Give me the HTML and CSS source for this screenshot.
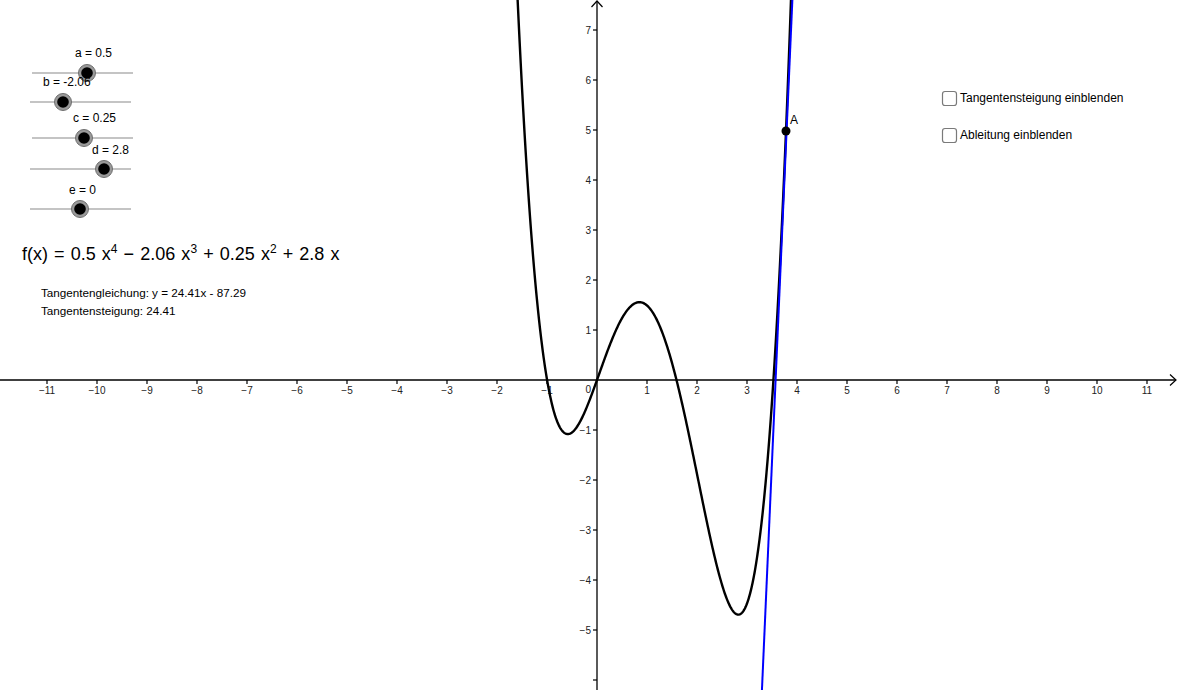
FILE: index.html
```html
<!DOCTYPE html>
<html lang="de">
<head>
<meta charset="utf-8">
<title>Tangente</title>
<link rel="stylesheet" href="styles.css">
</head>
<body>
<div class="app">
<svg class="board" width="1178" height="690" viewBox="0 0 1178 690" xmlns="http://www.w3.org/2000/svg">
  <!-- axes -->
  <g class="axis">
    <line x1="0" y1="380" x2="1176" y2="380"/>
    <line x1="597" y1="1" x2="597" y2="690"/>
    <polyline class="arrow" points="1170,374.5 1176,380 1170,385.5"/>
    <polyline class="arrow" points="591.5,7 597,1 602.5,7"/>
  </g>
  <g class="ticks" id="ticks"></g>
  <g class="xlabels">
    <text x="47" y="394">−11</text>
    <text x="97" y="394">−10</text>
    <text x="147" y="394">−9</text>
    <text x="197" y="394">−8</text>
    <text x="247" y="394">−7</text>
    <text x="297" y="394">−6</text>
    <text x="347" y="394">−5</text>
    <text x="397" y="394">−4</text>
    <text x="447" y="394">−3</text>
    <text x="497" y="394">−2</text>
    <text x="547" y="394">−1</text>
    <text x="647" y="394">1</text>
    <text x="697" y="394">2</text>
    <text x="747" y="394">3</text>
    <text x="797" y="394">4</text>
    <text x="847" y="394">5</text>
    <text x="897" y="394">6</text>
    <text x="947" y="394">7</text>
    <text x="997" y="394">8</text>
    <text x="1047" y="394">9</text>
    <text x="1097" y="394">10</text>
    <text x="1147" y="394">11</text>
  </g>
  <g class="ylabels">
    <text x="591" y="34">7</text>
    <text x="591" y="84">6</text>
    <text x="591" y="134">5</text>
    <text x="591" y="184">4</text>
    <text x="591" y="234">3</text>
    <text x="591" y="284">2</text>
    <text x="591" y="334">1</text>
    <text x="591" y="393">0</text>
    <text x="591" y="434">−1</text>
    <text x="591" y="484">−2</text>
    <text x="591" y="534">−3</text>
    <text x="591" y="584">−4</text>
    <text x="591" y="634">−5</text>
  </g>

  <!-- graph -->
  <path id="curve" class="curve" d=""/>
  <line class="tangent" x1="792.8" y1="-10" x2="761.5" y2="700"/>
  <circle class="point" cx="786" cy="131" r="4.5"/>
  <text class="plabel" x="790" y="124">A</text>

  <!-- sliders -->
  <g class="slider">
    <text class="slabel" x="75" y="57">a = 0.5</text>
    <line x1="32" y1="73" x2="133" y2="73"/>
    <circle class="halo" cx="87" cy="73" r="8.5"/>
    <circle class="knob" cx="87" cy="73" r="5.8"/>
  </g>
  <g class="slider">
    <line x1="30" y1="102" x2="131" y2="102"/>
    <circle class="halo" cx="63" cy="102" r="8.5"/>
    <circle class="knob" cx="63" cy="102" r="5.8"/>
  </g>
  <g class="slider">
    <text class="slabel" x="73" y="122">c = 0.25</text>
    <line x1="32" y1="138" x2="133" y2="138"/>
    <circle class="halo" cx="84" cy="138" r="8.5"/>
    <circle class="knob" cx="84" cy="138" r="5.8"/>
  </g>
  <g class="slider">
    <line x1="30" y1="169" x2="131" y2="169"/>
    <circle class="halo" cx="104" cy="169" r="8.5"/>
    <circle class="knob" cx="104" cy="169" r="5.8"/>
  </g>
  <g class="slider">
    <text class="slabel" x="69" y="194">e = 0</text>
    <line x1="30" y1="209" x2="131" y2="209"/>
    <circle class="halo" cx="80" cy="209" r="8.5"/>
    <circle class="knob" cx="80" cy="209" r="5.8"/>
  </g>
  <text class="slabel" x="43" y="86">b = -2.06</text>
  <text class="slabel" x="92" y="154">d = 2.8</text>

  <!-- formula -->
  <text class="formula" x="22" y="260">f(x) = 0.5 x<tspan class="sup" dy="-7">4</tspan><tspan dy="7"> − 2.06 x</tspan><tspan class="sup" dy="-7">3</tspan><tspan dy="7"> + 0.25 x</tspan><tspan class="sup" dy="-7">2</tspan><tspan dy="7"> + 2.8 x</tspan></text>

  <text class="info" x="41" y="297">Tangentengleichung: y = 24.41x - 87.29</text>
  <text class="info" x="41" y="315">Tangentensteigung: 24.41</text>

  <!-- checkboxes -->
  <rect class="cbox" x="942.5" y="91.5" width="14" height="14" rx="2.5"/>
  <text class="cblabel" x="960" y="102">Tangentensteigung einblenden</text>
  <rect class="cbox" x="942.5" y="128.5" width="14" height="14" rx="2.5"/>
  <text class="cblabel" x="960" y="139">Ableitung einblenden</text>
</svg>
</div>
<script src="script.js"></script>
</body>
</html>
```

FILE: styles.css
```css
html, body {
  margin: 0;
  padding: 0;
  background: #ffffff;
  overflow: hidden;
}
.app {
  width: 1178px;
  height: 690px;
}
.board {
  display: block;
  font-family: "Liberation Sans", Arial, sans-serif;
}
.axis line {
  stroke: #000;
  stroke-width: 1.3;
}
.arrow {
  fill: none;
  stroke: #000;
  stroke-width: 1.2;
}
.ticks line {
  stroke: #000;
  stroke-width: 1.2;
}
.xlabels text {
  font-size: 10px;
  fill: #222;
  text-anchor: middle;
}
.ylabels text {
  font-size: 10px;
  fill: #222;
  text-anchor: end;
}
.curve {
  fill: none;
  stroke: #000;
  stroke-width: 2.4;
  stroke-linejoin: round;
}
.tangent {
  stroke: #0000ff;
  stroke-width: 2;
}
.point {
  fill: #000;
}
.plabel {
  font-size: 12px;
  fill: #000;
}
.slider line {
  stroke: #8a8a8a;
  stroke-width: 1.2;
}
.halo {
  fill: #9a9a9a;
  stroke: #6f6f6f;
  stroke-width: 1;
}
.knob {
  fill: #000;
}
.slabel {
  font-size: 12px;
  fill: #000;
}
.formula {
  font-size: 18px;
  fill: #000;
  word-spacing: 1.1px;
}
.sup {
  font-size: 12px;
}
.info {
  font-size: 11.7px;
  fill: #000;
}
.cblabel {
  font-size: 12px;
  fill: #000;
}
.cbox {
  fill: #fff;
  stroke: #7a7a7a;
  stroke-width: 1.2;
}
```

FILE: script.js
```js
(function () {
  var NS = "http://www.w3.org/2000/svg";
  var f = function (x) { return 0.5 * Math.pow(x, 4) - 2.06 * Math.pow(x, 3) + 0.25 * x * x + 2.8 * x; };
  var X = function (x) { return 597 + 50 * x; };
  var Y = function (y) { return 380 - 50 * y; };
  var d = "";
  for (var i = 0; i <= 620; i++) {
    var x = -1.75 + i * 0.01;
    var py = Y(f(x));
    if (py < -40) py = -40;
    if (py > 730) py = 730;
    d += (i ? "L" : "M") + X(x).toFixed(2) + " " + py.toFixed(2);
  }
  document.getElementById("curve").setAttribute("d", d);

  var g = document.getElementById("ticks");
  function line(x1, y1, x2, y2) {
    var l = document.createElementNS(NS, "line");
    l.setAttribute("x1", x1); l.setAttribute("y1", y1);
    l.setAttribute("x2", x2); l.setAttribute("y2", y2);
    g.appendChild(l);
  }
  for (var k = -11; k <= 11; k++) {
    if (k === 0) continue;
    line(X(k), 380, X(k), 384);
  }
  for (var j = -6; j <= 7; j++) {
    if (j === 0) continue;
    line(593, Y(j), 597, Y(j));
  }
})();
```
